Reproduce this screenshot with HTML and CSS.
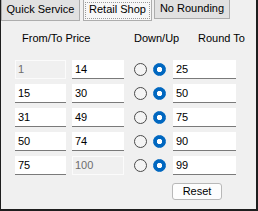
FILE: index.html
```html
<!DOCTYPE html>
<html>
<head>
<meta charset="utf-8">
<link rel="stylesheet" href="styles.css">
</head>
<body>
<div class="frame">
  <div class="tabs">
    <div class="btn b-quick">Quick Service</div>
    <div class="btn b-retail">Retail Shop</div>
    <div class="btn b-none">No Rounding</div>
  </div>
  <div class="head">
    <span class="h1">From/To Price</span>
    <span class="h2">Down/Up</span>
    <span class="h3">Round To</span>
  </div>
  <div class="rows">
    <div class="row">
      <div class="tb w1 dis">1</div>
      <div class="tb w2">14</div>
      <span class="rb r1"></span>
      <span class="rb r2 on"></span>
      <div class="tb w3">25</div>
    </div>
    <div class="row">
      <div class="tb w1">15</div>
      <div class="tb w2">30</div>
      <span class="rb r1"></span>
      <span class="rb r2 on"></span>
      <div class="tb w3">50</div>
    </div>
    <div class="row">
      <div class="tb w1">31</div>
      <div class="tb w2">49</div>
      <span class="rb r1"></span>
      <span class="rb r2 on"></span>
      <div class="tb w3">75</div>
    </div>
    <div class="row">
      <div class="tb w1">50</div>
      <div class="tb w2">74</div>
      <span class="rb r1"></span>
      <span class="rb r2 on"></span>
      <div class="tb w3">90</div>
    </div>
    <div class="row">
      <div class="tb w1">75</div>
      <div class="tb w2 dis">100</div>
      <span class="rb r1"></span>
      <span class="rb r2 on"></span>
      <div class="tb w3">99</div>
    </div>
  </div>
  <div class="foot">
    <div class="reset">Reset</div>
  </div>
</div>
</body>
</html>
```
FILE: styles.css
```css
html, body {
  margin: 0;
  padding: 0;
  background: #f0f0f0;
}
.frame {
  width: 258px;
  height: 211px;
  box-sizing: border-box;
  border-left: 1px solid #1e1e1e;
  border-right: 2px solid #1e1e1e;
  border-bottom: 2px solid #1e1e1e;
  background: #f0f0f0;
  font-family: "Liberation Sans", Arial, sans-serif;
  font-size: 11px;
  color: #000;
  overflow: hidden;
}
.tabs {
  display: flex;
  align-items: flex-start;
  height: 21px;
}
.btn {
  box-sizing: border-box;
  height: 21px;
  line-height: 19px;
  text-align: center;
  background: #e1e1e1;
  border: 1px solid #adadad;
  border-top: none;
  white-space: nowrap;
}
.b-quick {
  width: 79px;
}
.b-retail {
  width: 69px;
  margin-left: 3px;
  background: #f7f7f7;
  outline: 1px dotted #9a9a9a;
  outline-offset: -3px;
}
.b-none {
  width: 76px;
  height: 19px;
  line-height: 17px;
  margin-left: 2px;
}
.head {
  display: flex;
  margin-top: 11px;
  height: 13px;
  line-height: 13px;
}
.h1 {
  margin-left: 21px;
  width: 112px;
}
.h2 {
  width: 64px;
}
.rows {
  margin-top: 15px;
  display: flex;
  flex-direction: column;
  gap: 5px;
  padding-left: 14px;
}
.row {
  display: flex;
  align-items: center;
  height: 19px;
}
.tb {
  box-sizing: border-box;
  height: 19px;
  line-height: 18px;
  padding-left: 3px;
  background: #fff;
  border-bottom: 1px solid #7a7a7a;
}
.tb.dis {
  background: #f0f0f0;
  border: 1px solid #fbfbfb;
  padding-left: 2px;
  line-height: 17px;
  color: #6d6d6d;
}
.w1 { width: 51px; }
.w2 { width: 52px; margin-left: 6px; }
.w3 { width: 63px; margin-left: 7px; }
.rb {
  box-sizing: border-box;
  width: 13px;
  height: 13px;
  border-radius: 50%;
  border: 1px solid #4a4a4a;
  background: #f4f4f4;
}
.r1 { margin-left: 10px; }
.r2 { margin-left: 6px; }
.rb.on {
  border-color: #0067c0;
  background: radial-gradient(circle, #fff 0 2.3px, #0067c0 3px);
}
.foot {
  display: flex;
  margin-top: 8px;
  padding-left: 171px;
}
.reset {
  box-sizing: border-box;
  width: 50px;
  height: 17px;
  line-height: 15px;
  text-align: center;
  background: #fdfdfd;
  border: 1px solid #b8b8b8;
  border-radius: 3px;
}
```
